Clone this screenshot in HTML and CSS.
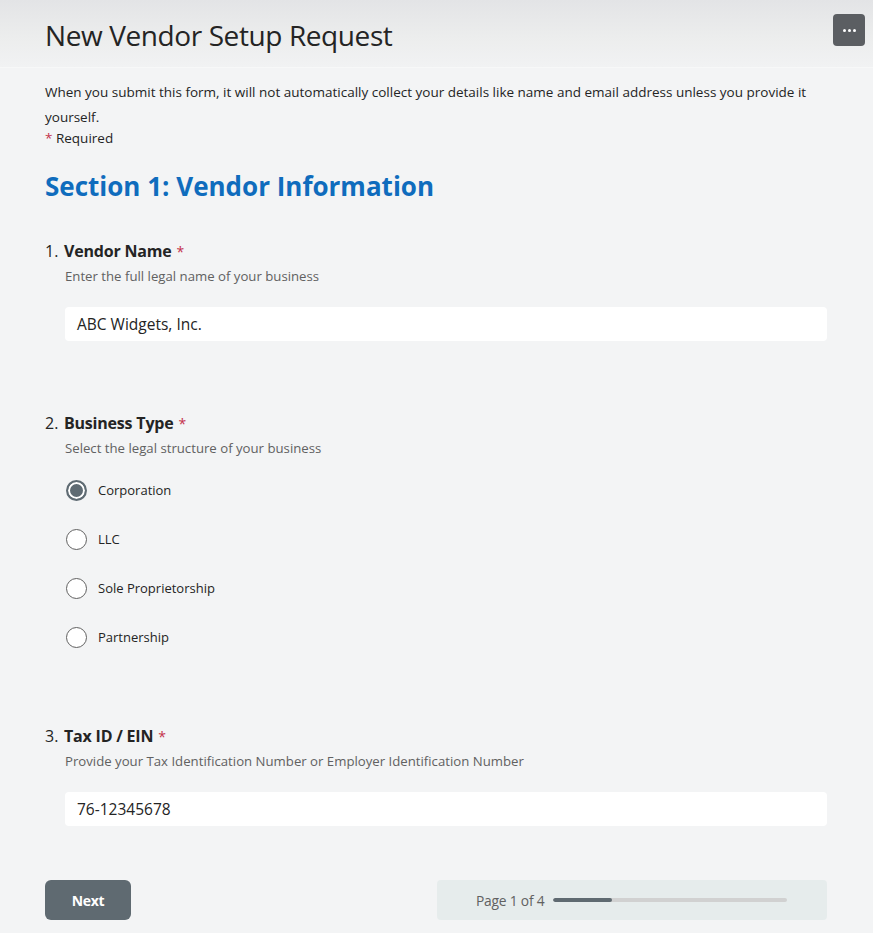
FILE: index.html
```html
<!DOCTYPE html>
<html lang="en">
<head>
<meta charset="utf-8">
<title>New Vendor Setup Request</title>
<link rel="stylesheet" href="styles.css">
</head>
<body>
<header class="top">
  <h1 class="title">New Vendor Setup Request</h1>
  <button class="menu" aria-label="More options"><span></span><span></span><span></span></button>
</header>
<main class="form">
  <p class="intro">When you submit this form, it will not automatically collect your details like name and email address unless you provide it yourself.</p>
  <p class="req"><span class="star">*</span> Required</p>
  <h2 class="section">Section 1: Vendor Information</h2>

  <section class="q q1">
    <div class="qtitle"><span class="num">1.</span><span class="label">Vendor Name</span><span class="star">*</span></div>
    <div class="qdesc">Enter the full legal name of your business</div>
    <div class="field">ABC Widgets, Inc.</div>
  </section>

  <section class="q q2">
    <div class="qtitle"><span class="num">2.</span><span class="label">Business Type</span><span class="star">*</span></div>
    <div class="qdesc">Select the legal structure of your business</div>
    <ul class="choices">
      <li class="choice checked"><span class="radio"></span>Corporation</li>
      <li class="choice"><span class="radio"></span>LLC</li>
      <li class="choice"><span class="radio"></span>Sole Proprietorship</li>
      <li class="choice"><span class="radio"></span>Partnership</li>
    </ul>
  </section>

  <section class="q q3">
    <div class="qtitle"><span class="num">3.</span><span class="label">Tax ID / EIN</span><span class="star">*</span></div>
    <div class="qdesc">Provide your Tax Identification Number or Employer Identification Number</div>
    <div class="field">76-12345678</div>
  </section>

  <footer class="actions">
    <button class="next">Next</button>
    <div class="pager">
      <span class="pagetext">Page 1 of 4</span>
      <span class="track"><span class="fill" style="width:25%"></span></span>
    </div>
  </footer>
</main>
</body>
</html>
```
FILE: styles.css
```css
* { box-sizing: border-box; }
html, body { margin: 0; padding: 0; }
body {
  background: #f3f4f5;
  font-family: "Open Sans", "Noto Sans", "Liberation Sans", sans-serif;
  color: #242424;
  width: 873px;
  height: 933px;
  overflow: hidden;
}
.top {
  height: 68px;
  background: linear-gradient(180deg, #e3e4e6 0%, #eceded 55%, #f1f2f3 100%);
  border-bottom: 1px solid #f7f8f8;
  display: flex;
  align-items: flex-start;
  justify-content: space-between;
  padding: 0 8px 0 45px;
}
.title {
  margin: 17px 0 0;
  font-size: 28px;
  font-weight: 400;
  letter-spacing: -0.4px;
  color: #242424;
  line-height: 36px;
}
.menu {
  margin-top: 14px;
  width: 32px;
  height: 32px;
  border: 0;
  border-radius: 4px;
  background: #5b5e62;
  display: flex;
  align-items: center;
  justify-content: center;
  gap: 2px;
  padding: 0;
}
.menu span {
  width: 3px;
  height: 3px;
  border-radius: 50%;
  background: #fff;
}
.form { padding: 0 46px 0 45px; }
.intro {
  margin: 12px 0 0;
  font-size: 13.5px;
  line-height: 25px;
  color: #242424;
}
.req {
  margin: 0;
  font-size: 13.5px;
  line-height: 17px;
  color: #242424;
}
.star { color: #c4314b; }
.section {
  margin: 22px 0 0;
  font-size: 26px;
  font-weight: 700;
  color: #0f6cbd;
  line-height: 34px;
}
.q { margin-top: 36px; }
.q2 { margin-top: 70px; }
.q3 { margin-top: 75px; }
.qtitle {
  display: flex;
  align-items: baseline;
  font-size: 16px;
  line-height: 24px;
}
.num { width: 19px; font-weight: 400; }
.label { font-weight: 700; letter-spacing: -0.2px; }
.qtitle .star { margin-left: 5px; font-size: 14px; }
.qdesc {
  margin: 2px 0 0 20px;
  font-size: 13.2px;
  line-height: 20px;
  color: #616161;
}
.field {
  margin: 21px 0 0 20px;
  height: 34px;
  background: #fff;
  border-radius: 4px;
  padding: 0 12px;
  display: flex;
  align-items: center;
  font-size: 15.5px;
  color: #242424;
}
.choices {
  list-style: none;
  margin: 20px 0 0 20px;
  padding: 0;
  display: flex;
  flex-direction: column;
  gap: 25px;
}
.choice {
  display: flex;
  align-items: center;
  height: 24px;
  font-size: 13px;
  color: #242424;
}
.radio {
  width: 21px;
  height: 21px;
  border-radius: 50%;
  border: 1px solid #616161;
  background: #fff;
  margin: 0 11px 0 1px;
  flex: none;
}
.choice.checked .radio {
  border: 2px solid #5f6b73;
  background: #5f6b73;
  box-shadow: inset 0 0 0 2px #fff;
}
.actions {
  margin-top: 54px;
  display: flex;
  justify-content: space-between;
  align-items: center;
}
.next {
  width: 86px;
  height: 40px;
  border: 0;
  border-radius: 6px;
  background: #5f6a71;
  color: #fff;
  font-family: inherit;
  font-size: 14px;
  font-weight: 700;
  letter-spacing: -0.3px;
}
.pager {
  width: 390px;
  height: 40px;
  background: #e6ecec;
  border-radius: 4px;
  display: flex;
  align-items: center;
  padding-left: 39px;
}
.pagetext {
  font-size: 13.8px;
  color: #616161;
  letter-spacing: -0.2px;
}
.track {
  margin-left: 9px;
  width: 234px;
  height: 4px;
  background: #d1d1d1;
  border-radius: 2px;
  overflow: hidden;
  display: block;
}
.fill {
  display: block;
  height: 100%;
  background: #5f6a71;
  border-radius: 2px;
}
```
